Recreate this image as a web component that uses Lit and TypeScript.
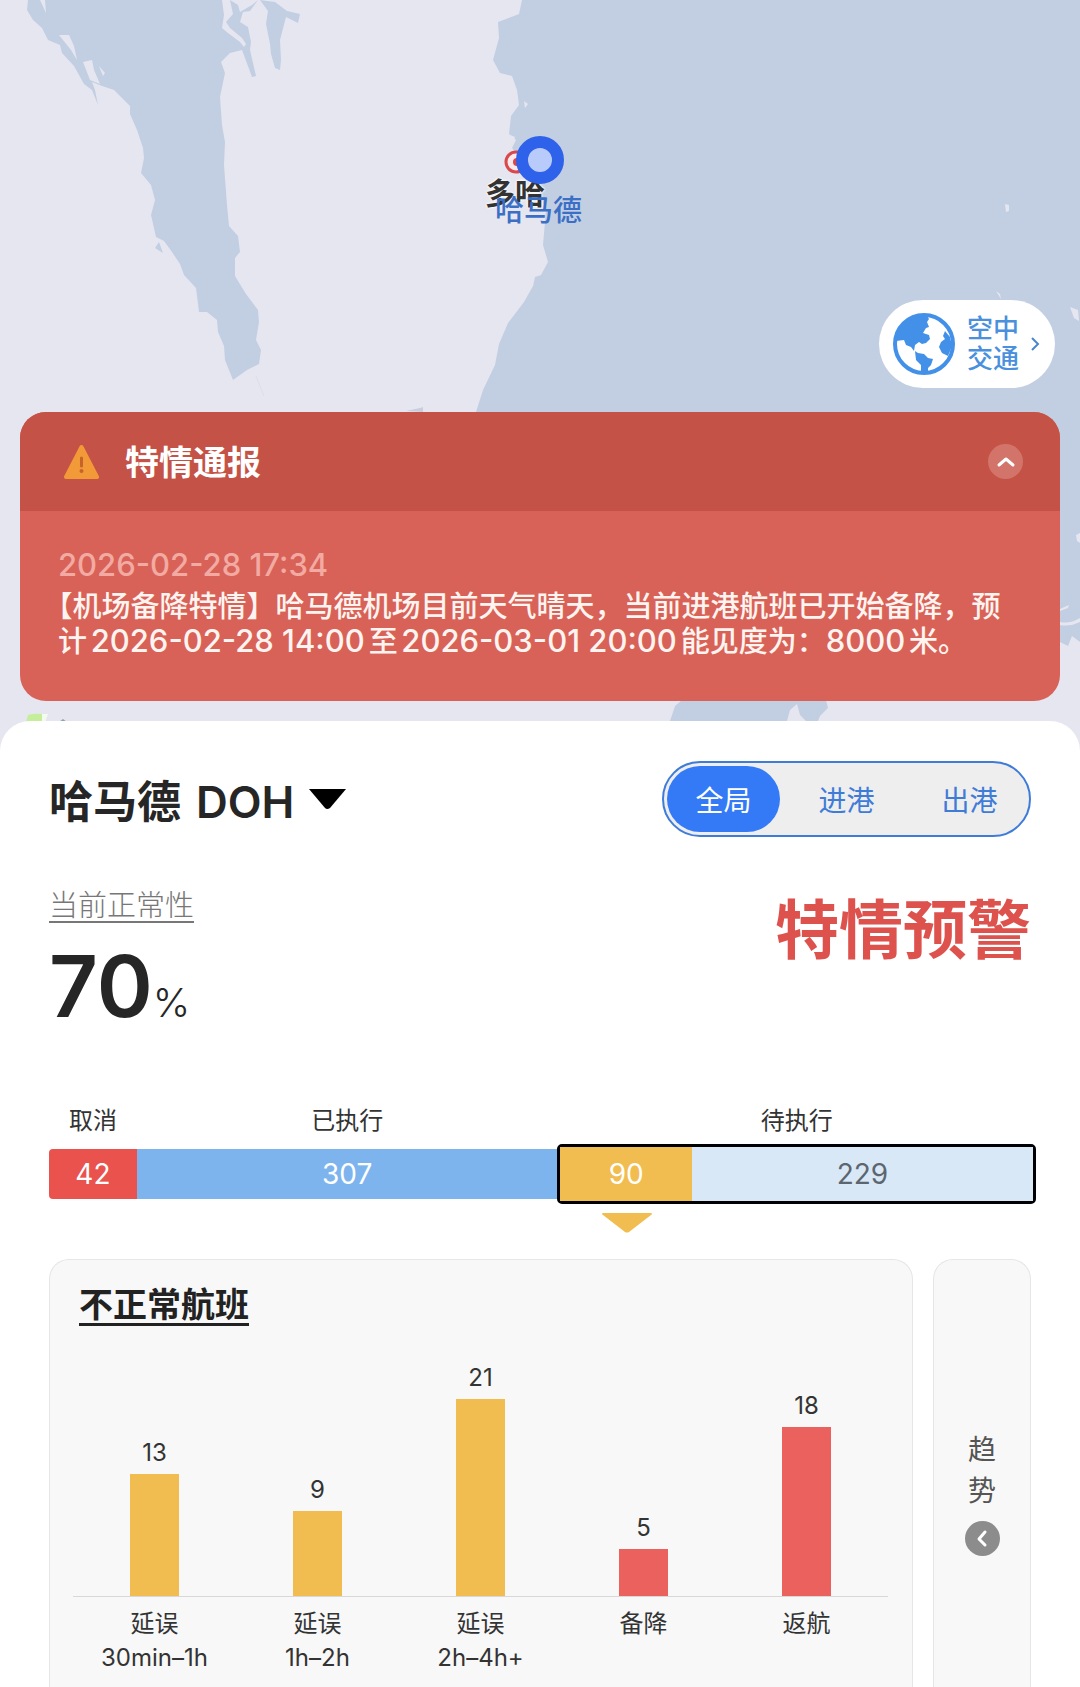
import { LitElement, html, css, svg } from "lit";
import { customElement, state } from "lit/decorators.js";
import { classMap } from "lit/directives/class-map.js";
import { styleMap } from "lit/directives/style-map.js";

const FONT = css`Inter, "Noto Sans CJK SC", sans-serif`;

/** Water areas of the gulf coast, drawn over the land colour. */
const WATER = [
  "M28 0L27 10L33 20L42 28L48 40L60 45L62 53L74 66L84 84L92 90L98 105L95 90L92 82L102 86L114 90L124 100L130 106L130 114L137 130L143 148L144 158L141 173L151 185L155 200L151 215L156 237L164 241L172 252L180 264L184 275L196 288L199 312L207 312L217 320L218 332L224 346L225 360L233 380L247 370L259 364L261 350L256 340L259 322L258 310L246 294L235 276L235 258L240 252L238 236L229 226L227 205L224 165L225 142L222 125L220 97L225 73L221 62L230 53L242 50L252 77L256 76L250 50L251 42L248 27L240 22L243 12L250 11L258 0L252 5L240 12L238 5L230 0L233 14L226 22L230 28L242 38L246 44L244 47L240 42L228 33L222 28L224 15L222 0Z",
  "M260 0L268 11L266 24L270 44L271 54L275 68L280 70L281 60L280 40L286 17L298 23L300 14L287 11L275 2Z",
  "M522 0L519 14L498 22L499 38L493 60L500 73L512 76L517 90L519 105L511 116L509 134L516 140L512 148L530 170L546 210L543 245L548 262L541 275L535 277L533 286L524 302L508 323L499 344L495 365L483 390L476 412L560 430L1040 500V640L1056 640L1068 646L1072 636L1080 642V0Z",
  "M670 721L675 706L682 700L690 694L815 694L826 700L828 708L820 716L818 721Z",
  "M155 248L159 242L163 253Z",
];

const LAND = [
  "M59 35L69 35L74 46L77 60L71 50Z",
  "M83 62L92 60L94 70L100 84L90 80Z",
  "M99 66L105 73L103 76Z",
  "M40 0L46 13L45 0Z",
  "M510 135L515 137L513 142L509 143Z",
  "M524 101L528 104L525 108Z",
  "M1005 204L1009 205L1009 211L1006 212Z",
  "M996 291L1000 294L1001 299Z",
  "M1070 307L1078 310L1079 321L1074 318Z",
  "M1076 535L1080 533V543L1077 541Z",
  "M1060 609L1069 605L1068 608L1060 611Z",
  "M1060 622Q1070 624 1080 618V622Q1070 627 1060 625Z",
  "M787 721L790 710L797 704L800 715L806 721Z",
];

interface Segment { label: string; count: number; share: number; tone: string; }
interface Column { value: number; label: string; range?: string; tone: string; }

const DONE: Segment[] = [
  { label: "取消", count: 42, share: 88, tone: "red" },
  { label: "已执行", count: 307, share: 421, tone: "blue" },
];
const PENDING: Segment[] = [
  { label: "延误", count: 90, share: 132, tone: "yellow" },
  { label: "正常", count: 229, share: 343, tone: "pale" },
];
const COLUMNS: Column[] = [
  { value: 13, label: "延误", range: "30min–1h", tone: "yellow" },
  { value: 9, label: "延误", range: "1h–2h", tone: "yellow" },
  { value: 21, label: "延误", range: "2h–4h+", tone: "yellow" },
  { value: 5, label: "备降", tone: "red" },
  { value: 18, label: "返航", tone: "red" },
];

@customElement("coast-map")
export class CoastMap extends LitElement {
  static styles = css`
    :host { display: block; }
    .map { display: block; width: 100%; height: 100%; }
  `;
  render() {
    return html`<svg class="map" viewBox="0 0 1080 760" preserveAspectRatio="xMidYMin slice" aria-hidden="true">
      <rect width="1080" height="760" fill="#e6e6f0"></rect>
      ${WATER.map((d) => svg`<path d=${d} fill="#c2cfe2"></path>`)}
      ${LAND.map((d) => svg`<path d=${d} fill="#e6e6f0"></path>`)}
      <path d="M256 376L264 396" stroke="#dcdfe8" fill="none"></path>
      <path d="M406 411L420 408L423 407V412Z" fill="#c8cedd"></path>
      <path d="M26 722L28 715Q34 713 42 714L42 722Z" fill="#c5ee9c"></path>
      <path d="M42 714L48 714L45 722L42 722Z" fill="#f4fbee"></path>
      <path d="M59 722L63 719L67 722Z" fill="#86a6b4"></path>
    </svg>`;
  }
}

@customElement("status-bar-chart")
export class StatusBarChart extends LitElement {
  static styles = css`
    :host { display: block; font-family: ${FONT}; }
    .row { display: flex; align-items: center; }
    .part { display: flex; flex-direction: column; align-items: stretch; gap: 8px; min-width: 0; flex-basis: 0; }
    .label { font-size: 24px; line-height: 30px; text-align: center; color: #333; }
    .track { display: flex; height: 60px; align-items: center; box-sizing: border-box; }
    .cell { display: flex; align-items: center; justify-content: center; height: 50px; flex: 1 1 0; font-size: 28px; color: #fff; }
    .red { background: #e9524d; border-radius: 4px 0 0 4px; }
    .blue { background: #7db4ee; }
    .yellow { background: #f2bd50; position: relative; }
    .pale { background: #d9e8f6; color: #5c6670; }
    .framed { border: 3px solid #000; border-radius: 5px; }
    .framed .cell { height: 54px; }
    .pointer { position: absolute; top: 66px; left: 50%; margin-left: -25px; width: 52px; height: 20px; }
  `;
  render() {
    return html`<div class="row">
      ${DONE.map((s) => html`<div class="part" style=${styleMap({ flexGrow: String(s.share) })}>
        <span class="label">${s.label}</span>
        <div class="track"><span class="cell ${s.tone}">${s.count}</span></div>
      </div>`)}
      <div class="part" style=${styleMap({ flexGrow: "479" })}>
        <span class="label">待执行</span>
        <div class="track framed">
          ${PENDING.map((s) => html`<span class="cell ${s.tone}" style=${styleMap({ flexGrow: String(s.share) })}>${s.count}
            ${s.tone === "yellow"
              ? html`<svg class="pointer" viewBox="0 0 52 20" aria-hidden="true"><path d="M2 0H50Q52 1 50 2L28 19Q26 20 24 19L2 2Q0 1 2 0Z" fill="#f2bd50"></path></svg>`
              : null}</span>`)}
        </div>
      </div>
    </div>`;
  }
}

@customElement("abnormal-chart")
export class AbnormalChart extends LitElement {
  static styles = css`
    :host { display: block; font-family: ${FONT}; color: #333; }
    .plot { display: flex; align-items: flex-end; height: 232px; border-bottom: 1px solid #d8d8d8; }
    .col { flex: 1 1 0; display: flex; flex-direction: column; align-items: center; gap: 6px; }
    .value { font-size: 24px; line-height: 30px; }
    .bar { width: 49px; }
    .yellow { background: #f2bd50; }
    .red { background: #eb615e; }
    .names { display: flex; padding-top: 10px; }
    .name { flex: 1 1 0; display: flex; flex-direction: column; align-items: center; font-size: 24px; line-height: 34px; white-space: nowrap; }
  `;
  render() {
    return html`
      <div class="plot">
        ${COLUMNS.map((c) => html`<div class="col">
          <span class="value">${c.value}</span>
          <span class="bar ${c.tone}" style=${styleMap({ height: `${Math.round(c.value * 9.4)}px` })}></span>
        </div>`)}
      </div>
      <div class="names">
        ${COLUMNS.map((c) => html`<div class="name"><span>${c.label}</span>${c.range ? html`<span>${c.range}</span>` : null}</div>`)}
      </div>`;
  }
}

@customElement("app-root")
export class AppRoot extends LitElement {
  static styles = css`
    :host { display: flex; flex-direction: column; min-height: 100vh; background: #e6e6f0; font-family: ${FONT}; color: #262626; position: relative; }
    button { font: inherit; color: inherit; border: 0; background: none; padding: 0; margin: 0; cursor: pointer; }
    .backdrop { position: absolute; top: 0; left: 0; right: 0; height: 760px; }
    .hero { position: relative; display: flex; flex-direction: column; align-items: flex-end; padding: 300px 20px 20px; gap: 24px; }
    .city { position: absolute; left: 485px; top: 173px; font-size: 30px; line-height: 40px; font-weight: 700; color: #333; text-shadow: 0 0 2px #fff, 0 0 2px #fff, 0 0 3px #fff; }
    .pin { position: absolute; left: 504px; top: 135px; width: 62px; height: 52px; }
    .airport { position: absolute; left: 495px; top: 191px; font-size: 29px; line-height: 40px; font-weight: 500; color: #3b6fc6; }
    .traffic { display: flex; align-items: center; margin-right: 5px; height: 88px; padding: 0 15px 0 14px; border-radius: 44px; background: #fff; color: #4a90dc; text-decoration: none; font-size: 26px; line-height: 30px; font-weight: 500; }
    .globe { width: 62px; height: 62px; margin-right: 12px; }
    .traffic .chevron { width: 10px; height: 16px; margin-left: 11px; }
    .alert { align-self: stretch; border-radius: 26px; overflow: hidden; background: #d86257; color: #fff; }
    .alert-head { display: flex; align-items: center; height: 99px; padding: 0 37px 0 44px; background: #c55246; }
    .warn { width: 35px; height: 35px; }
    .alert-title { flex: 1; margin: 0 0 0 26px; padding-top: 2px; font-size: 34px; line-height: 44px; font-weight: 700; }
    .fold { width: 35px; height: 35px; }
    .fold svg, .trend svg { display: block; width: 100%; height: 100%; }
    .alert-body { padding: 36px 40px 42px 38px; font-size: 29px; font-weight: 500; }
    .time { display: block; font-size: 31px; line-height: 36px; color: #f2aaa2; }
    .message { margin: 6px 0 0; line-height: 35px; text-spacing-trim: trim-start; text-autospace: normal; color: #fff4f0; }
    .num { font-size: 31px; line-height: 30px; }
    .sheet { position: relative; flex: 1; display: flex; flex-direction: column; box-sizing: border-box; padding: 40px 49px 0; border-radius: 30px 30px 0 0; background: #fff; }
    .top { display: flex; align-items: center; justify-content: space-between; height: 76px; }
    .airport-pick { display: flex; align-items: center; gap: 15px; font-size: 44px; line-height: 56px; font-weight: 600; }
    .airport-name { display: flex; gap: 15px; padding-top: 6px; }
    .caret { width: 37px; height: 20px; }
    .tabs { display: flex; gap: 10px; box-sizing: border-box; height: 76px; padding: 3px; border: 2px solid #3f7cd8; border-radius: 38px; background: #eee; }
    .tab { width: 113px; border-radius: 33px; font-size: 28px; color: #3f7cd8; }
    .tab.on { background: #347af6; color: #fff; }
    .state { display: flex; justify-content: space-between; align-items: flex-start; padding-top: 48px; }
    .rate-label { display: inline-block; margin-top: 6px; border-bottom: 2px solid #777; font-size: 29px; line-height: 30px; font-weight: 300; color: #777; }
    .rate { margin: 16px 0 0; font-size: 85px; line-height: 96px; font-weight: 600; }
    .unit { font-size: 40px; font-weight: 300; }
    .warning { font-size: 64px; line-height: 76px; margin-top: 7px; font-weight: 700; color: #de524e; }
    .status { margin: 55px -5px 0 0; }
    .cards { flex: 1; display: flex; gap: 20px; margin-top: 55px; }
    .card { box-sizing: border-box; border: 1px solid #e6e6e6; border-bottom: 0; border-radius: 20px 20px 0 0; background: #f8f8f8; }
    .main { flex: 1; padding: 27px 24px 0 23px; }
    .heading { display: inline-block; margin: 0 0 0 6px; font-size: 34px; line-height: 36px; font-weight: 700; color: #222; border-bottom: 3px solid #222; }
    .chart { margin-top: 38px; }
    .trend { width: 98px; display: flex; flex-direction: column; align-items: center; padding-top: 170px; font-size: 28px; line-height: 41px; color: #555; }
    .trend .dot { width: 35px; height: 35px; margin-top: 9px; }
  `;

  @state() private tab = 0;
  @state() private open = true;

  render() {
    return html`
      <coast-map class="backdrop"></coast-map>
      <section class="hero">
        <span class="city">多哈</span>
        <svg class="pin" viewBox="0 0 62 52" aria-hidden="true">
          <circle cx="12" cy="27" r="10" fill="#fbe9ec" stroke="#d9494c" stroke-width="3"></circle>
          <circle cx="13" cy="27" r="4" fill="#d9494c"></circle>
          <circle cx="36" cy="25" r="18" fill="#b9cbfa" stroke="#2f62ea" stroke-width="12"></circle>
        </svg>
        <span class="airport">哈马德</span>
        <a class="traffic" href="#traffic">
          <svg class="globe" viewBox="0 0 62 62" aria-hidden="true">
            <circle cx="31" cy="31" r="29" fill="#fff"></circle>
            <path d="M31 3C17 3 4 14 3 28L11 27L13 32L18 34L21 38L22 32L26 29L29 31L33 30L37 26L36 22L30 20L33 15L36 14L34 9L36 6L34 3Z" fill="#4390e8"></path>
            <path d="M22 38L25 40L31 41L35 45L40 46L38 52L35 55V60H28L28 52L23 47Z" fill="#4390e8"></path>
            <path d="M52 18L50 23L52 26L48 29L46 34L49 40L55 43L59 33L57 24Z" fill="#4390e8"></path>
            <circle cx="31" cy="31" r="29" fill="none" stroke="#4390e8" stroke-width="4"></circle>
          </svg>
          <span>空中<br />交通</span>
          <svg class="chevron" viewBox="0 0 10 16" aria-hidden="true"><path d="M2 2L8 8L2 14" fill="none" stroke="#4a86cc" stroke-width="2"></path></svg>
        </a>
        <section class="alert">
          <header class="alert-head">
            <svg class="warn" viewBox="0 0 35 35" aria-hidden="true">
              <path d="M17.500 3L33 33H2Z" fill="#f39a38" stroke="#f39a38" stroke-width="4" stroke-linejoin="round"></path>
              <path d="M17.500 14V22" stroke="#c4632c" stroke-width="3" stroke-linecap="round"></path>
              <circle cx="17.500" cy="27" r="2" fill="#c4632c"></circle>
            </svg>
            <h2 class="alert-title">特情通报</h2>
            <button class="fold" aria-label="收起" @click=${() => (this.open = !this.open)}>
              <svg viewBox="0 0 35 35" aria-hidden="true">
                <circle cx="17.500" cy="17.500" r="17.500" fill="#d27469"></circle>
                <path d="M11 21L18 15L25 21" fill="none" stroke="#fff" stroke-width="3" stroke-linecap="round" stroke-linejoin="round"></path>
              </svg>
            </button>
          </header>
          ${this.open
            ? html`<div class="alert-body">
                <time class="time">2026-02-28 17:34</time>
                <p class="message">【机场备降特情】哈马德机场目前天气晴天，当前进港航班已开始备降，预计<span class="num">2026-02-28 14:00</span>至<span class="num">2026-03-01 20:00</span>能见度为：<span class="num">8000</span>米。</p>
              </div>`
            : null}
        </section>
      </section>
      <main class="sheet">
        <div class="top">
          <button class="airport-pick">
            <span class="airport-name"><span>哈马德</span><span>DOH</span></span>
            <svg class="caret" viewBox="0 0 37 20" aria-hidden="true"><path d="M0 0H37L21 19Q18 21 16 19Z" fill="#000"></path></svg>
          </button>
          <nav class="tabs">
            ${["全局", "进港", "出港"].map((name, i) => html`<button class=${classMap({ tab: true, on: i === this.tab })} @click=${() => (this.tab = i)}>${name}</button>`)}
          </nav>
        </div>
        <div class="state">
          <div>
            <span class="rate-label">当前正常性</span>
            <p class="rate">70<span class="unit">%</span></p>
          </div>
          <strong class="warning">特情预警</strong>
        </div>
        <status-bar-chart class="status"></status-bar-chart>
        <div class="cards">
          <section class="card main">
            <h3 class="heading">不正常航班</h3>
            <abnormal-chart class="chart"></abnormal-chart>
          </section>
          <button class="card trend">
            <span>趋</span><span>势</span>
            <span class="dot"><svg viewBox="0 0 35 35" aria-hidden="true">
              <circle cx="17.500" cy="17.500" r="17.500" fill="#8c8c8c"></circle>
              <path d="M20 11L14 18L20 24" fill="none" stroke="#fff" stroke-width="3" stroke-linecap="round" stroke-linejoin="round"></path>
            </svg></span>
          </button>
        </div>
      </main>`;
  }
}
